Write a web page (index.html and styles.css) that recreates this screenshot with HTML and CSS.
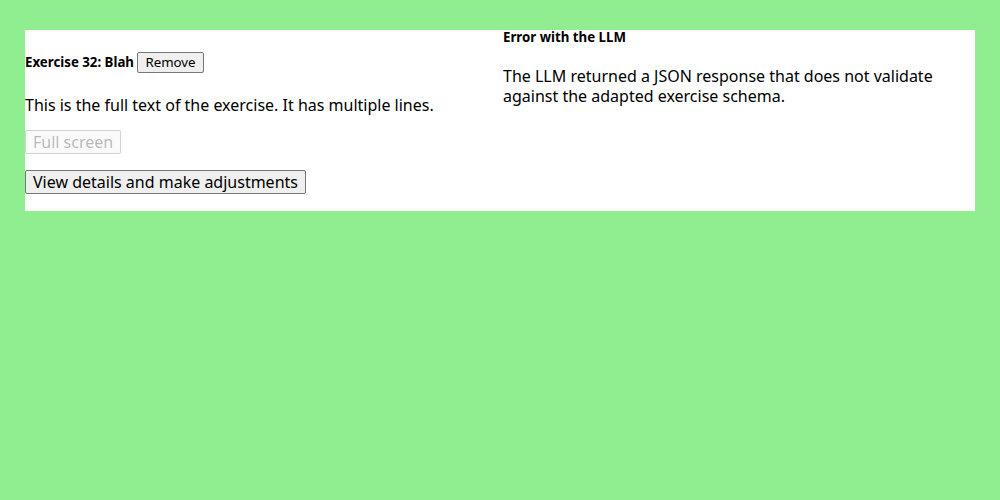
FILE: index.html
```html
<!DOCTYPE html>
<html>
<head>
<meta charset="utf-8">
<link rel="stylesheet" href="styles.css">
</head>
<body>
<div class="page">
  <div class="panel">
    <div class="col left">
      <h5 class="title">Exercise 32: Blah <button class="btn">Remove</button></h5>
      <p class="text">This is the full text of the exercise. It has multiple lines.</p>
      <p class="row first"><button class="btn" disabled>Full screen</button></p>
      <p class="row last"><button class="btn">View details and make adjustments</button></p>
    </div>
    <div class="col right">
      <h5 class="err-title">Error with the LLM</h5>
      <p class="err-text">The LLM returned a JSON response that does not validate against the adapted exercise schema.</p>
    </div>
  </div>
</div>
</body>
</html>
```
FILE: styles.css
```css
html, body {
  margin: 0;
  padding: 0;
}
body {
  background: #90ee90;
  font-family: "Noto Sans", sans-serif;
  font-size: 16px;
  line-height: 1.25;
  color: #000;
}
.page {
  padding: 30px 25px;
}
.panel {
  background: #fff;
  display: grid;
  grid-template-columns: 1fr 1fr;
  column-gap: 6px;
}
.col {
  display: flow-root;
}
.title {
  font-size: 13.28px;
  font-weight: bold;
  margin: 22px 0;
}
.btn {
  font: inherit;
  font-weight: normal;
  line-height: inherit;
  color: #000;
  background: #efefef;
  border: 1px solid #767676;
  border-radius: 2px;
  padding: 1px 7px;
}
.btn:disabled {
  color: rgba(16, 16, 16, 0.3);
  border-color: rgba(118, 118, 118, 0.3);
  background: rgba(239, 239, 239, 0.3);
}
.text {
  margin: 16px 0 15px;
}
.row {
  margin: 16px 0;
}
.row.first {
  margin-top: 15px;
}
.row.last {
  margin-bottom: 17px;
}
.err-title {
  font-size: 13.28px;
  font-weight: bold;
  line-height: 14px;
  margin: 0 0 22px 0;
}
.err-text {
  margin: 0;
}
```
